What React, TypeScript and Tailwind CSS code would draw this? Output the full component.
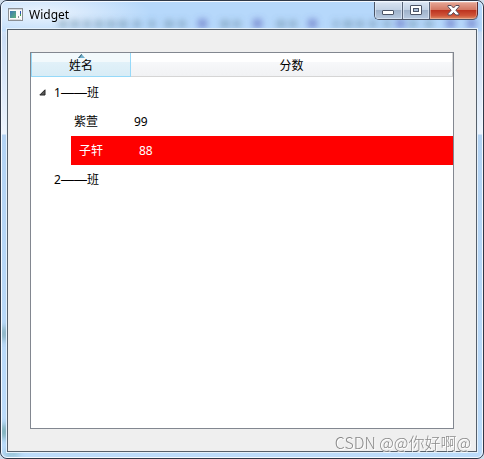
import { clsx } from 'clsx';

interface Student {
  name: string;
  score: number;
}

interface ClassGroup {
  number: number;
  students: Student[];
}

const GROUPS: ClassGroup[] = [
  {
    number: 1,
    students: [
      { name: '紫萱', score: 99 },
      { name: '子轩', score: 88 },
    ],
  },
  { number: 2, students: [] },
];

const SELECTED = '子轩';

// Blurred desktop shining through the glass frame
function GlassBackdrop() {
  const marks = [
    [62, 8], [74, 8], [86, 7], [98, 8], [110, 8], [122, 9], [136, 7], [151, 6],
    [168, 9], [181, 7], [224, 9], [236, 7], [280, 9], [292, 7], [335, 5], [347, 9],
    [359, 7], [372, 7], [386, 7], [412, 8], [428, 8],
  ];
  const zeros = [202, 257, 312, 400, 450, 471];

  return (
    <svg className="absolute inset-0 h-full w-full" aria-hidden="true">
      <defs>
        <filter id="soft" x="-50%" y="-50%" width="200%" height="200%">
          <feGaussianBlur stdDeviation="3" />
        </filter>
        <radialGradient id="glow">
          <stop offset="0" stopColor="#f2f7fd" stopOpacity="0.9" />
          <stop offset="1" stopColor="#f2f7fd" stopOpacity="0" />
        </radialGradient>
      </defs>
      <ellipse cx="40" cy="12" rx="110" ry="26" fill="url(#glow)" />
      <g filter="url(#soft)">
        {marks.map(([x, w]) => (
          <rect key={x} x={x - w / 2} y="19" width={w} height="8" fill="#55788f" opacity="0.42" />
        ))}
        {zeros.map((x) => (
          <rect key={x} x={x - 5} y="18" width="9" height="9" fill="#5a66bb" opacity="0.6" />
        ))}
        <rect x="0" y="326" width="6" height="13" fill="#5f8f8f" opacity="0.7" />
        <rect x="0" y="424" width="6" height="13" fill="#4f8f86" opacity="0.8" />
        <rect x="4" y="450" width="14" height="5" fill="#5f9f9f" opacity="0.6" />
      </g>
    </svg>
  );
}

function AppIcon() {
  return (
    <svg width="16" height="16" viewBox="0 0 16 16" aria-hidden="true">
      <defs>
        <linearGradient id="pane" x1="0" y1="0" x2="1" y2="1">
          <stop offset="0" stopColor="#3c78b4" />
          <stop offset="1" stopColor="#5fb37a" />
        </linearGradient>
      </defs>
      <rect x="0.5" y="1.5" width="14" height="12" fill="#fbfbfb" stroke="#8b8f94" />
      <path d="M1 2.5h13" stroke="#d5d9dd" />
      <rect x="2" y="4" width="6" height="7" fill="url(#pane)" />
      <path d="M2 12.5h11" stroke="#d9d9d9" />
      <rect x="12" y="4" width="1" height="3" fill="#2f55b5" />
      <rect x="12" y="7" width="1" height="2" fill="#3c9c50" />
      <rect x="10" y="9" width="1" height="2" fill="#8a9298" />
    </svg>
  );
}

function WindowButtons() {
  const glass =
    'flex items-center justify-center border-r border-[#596579] bg-[linear-gradient(#d8e3f1_0%,#c3d2e5_45%,#9fb2ca_50%,#b9cbe1_100%)] shadow-[inset_0_0_0_1px_#e3ecf7aa]';

  return (
    <div className="relative flex h-[18px] overflow-hidden rounded-b-[5px] border-b border-l border-[#4b5567]">
      <button type="button" aria-label="Minimize" className={clsx(glass, 'w-7')}>
        <svg width="13" height="7" viewBox="0 0 13 7" className="mt-1">
          <rect x="0.5" y="1.5" width="11" height="4" rx="0.5" fill="#fff" stroke="#4c5466" />
        </svg>
      </button>
      <button type="button" aria-label="Maximize" className={clsx(glass, 'w-[27px]')}>
        <svg width="12" height="11" viewBox="0 0 12 11">
          <rect x="0.5" y="0.5" width="11" height="9" rx="0.5" fill="#fff" stroke="#4c5466" />
          <rect x="3.5" y="3.5" width="5" height="3" fill="#a9bdd6" stroke="#4c5466" />
        </svg>
      </button>
      <button
        type="button"
        aria-label="Close"
        className="flex w-12 items-center justify-center rounded-br-[5px] border-r border-[#5d2a2e] bg-[linear-gradient(#e5a797_0%,#d37863_45%,#bd3420_50%,#cf5539_80%,#dc8f68_100%)] shadow-[inset_0_0_0_1px_#f3c6b888]"
      >
        <svg width="13" height="11" viewBox="0 0 13 11">
          <path
            d="M1 .5h3.2L6.5 3 8.8.5H12v1.2L8.8 5.2 12 8.8V10H8.8L6.5 7.5 4.2 10H1V8.8l3.2-3.6L1 1.7z"
            fill="#fff"
            stroke="#564a58"
          />
        </svg>
      </button>
    </div>
  );
}

function TitleBar() {
  return (
    <header className="relative flex h-[26px] items-start justify-between">
      <div className="flex h-[26px] items-center gap-[5px] pl-[2px]">
        <AppIcon />
        <h1 className="text-xs text-black">Widget</h1>
      </div>
      <WindowButtons />
    </header>
  );
}

function ExpandArrow() {
  return (
    <svg width="7" height="7" viewBox="0 0 7 7">
      <path d="M6 .8V6H.8z" fill="#595959" stroke="#262626" />
    </svg>
  );
}

function GroupRows({ group }: { group: ClassGroup }) {
  const expanded = group.students.length > 0;

  return (
    <>
      <tr className="h-[29px]">
        <td colSpan={2} className="p-0">
          <div className="flex items-center pl-2">
            <div className="w-[15px]">
              {expanded && (
                <button type="button" aria-label="Collapse" className="block">
                  <ExpandArrow />
                </button>
              )}
            </div>
            <span>
              {group.number}
              <span className="font-['Liberation_Sans',sans-serif] text-[13px] leading-4">——</span>
              班
            </span>
          </div>
        </td>
      </tr>
      {group.students.map((student) => {
        const selected = student.name === SELECTED;
        const cell = clsx(
          'flex h-[29px] items-center',
          selected ? 'bg-[#ff0000] pl-2 text-white' : 'pl-[3px]'
        );
        return (
          <tr key={student.name} className="h-[29px]" aria-selected={selected}>
            <td className="p-0 pl-10">
              <div className={cell}>{student.name}</div>
            </td>
            <td className="p-0">
              <div className={cell}>{student.score}</div>
            </td>
          </tr>
        );
      })}
    </>
  );
}

function ScoreTree() {
  return (
    <div className="flex-1 border border-[#828790] bg-white">
      <table className="w-full table-fixed border-separate border-spacing-0 text-xs text-black">
        <thead>
          <tr className="h-6">
            <th className="relative w-[100px] border-x border-b border-[#96d9f9] bg-[linear-gradient(#f2f9fc_0%,#f2f9fc_40%,#e1f1f9_40%,#d8ecf6_100%)] p-0 font-normal">
              <svg width="7" height="4" viewBox="0 0 7 4" className="absolute inset-x-0 top-px mx-auto">
                <path d="M3.5 0L7 4H0z" fill="#6fb0cc" />
                <path d="M3.5 0L0 4h1.5L4 .6z" fill="#3c5e72" />
              </svg>
              <span className="block pt-[2px]">姓名</span>
            </th>
            <th className="border-r border-b border-[#d5d5d5] bg-[linear-gradient(#ffffff_0%,#ffffff_40%,#f7f8fa_40%,#f1f2f4_100%)] p-0 font-normal">
              <span className="block pt-[2px]">分数</span>
            </th>
          </tr>
        </thead>
        <tbody>
          <tr aria-hidden="true">
            <td colSpan={2} className="h-px p-0" />
          </tr>
          {GROUPS.map((group) => (
            <GroupRows key={group.number} group={group} />
          ))}
        </tbody>
      </table>
    </div>
  );
}

export default function App() {
  return (
    <div className="min-h-screen bg-[#cfdcea] font-['Noto_Sans','Noto_Sans_CJK_SC',sans-serif]">
      <div className="relative flex min-h-screen flex-col overflow-hidden rounded-[7px] border border-[#2f3848] bg-[linear-gradient(#b6d8fb_0px,#b6d8fb_30px,#c9dcf5_31px,#edf4fd_133px,#b3d3f4_134px,#bcdcfb_100%)]">
        <GlassBackdrop />
        <div className="relative flex flex-1 flex-col rounded-md border border-[#f4f9ff] px-1 pb-1">
          <TitleBar />
          <div className="flex flex-1 flex-col border border-[#e4f1fc]">
            <main className="flex flex-1 flex-col border border-[#56606b] bg-[#efefef] p-[22px]">
              <ScoreTree />
            </main>
          </div>
        </div>
        <p className="absolute right-3 bottom-1 font-['Noto_Sans_CJK_SC',sans-serif] text-base font-light text-[#8a8a8a] [text-shadow:1px_1px_0_#ffffff]">
          CSDN @@你好啊@
        </p>
      </div>
    </div>
  );
}
